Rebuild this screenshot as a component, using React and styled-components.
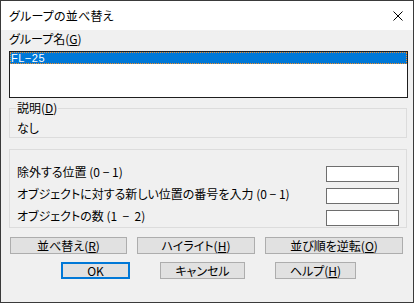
import React from "react"
import styled, { createGlobalStyle } from "styled-components"

const GlobalStyle = createGlobalStyle`
html, body {
  margin: 0;
  padding: 0;
  background: #f0f0f0;
}
body {
  font-family: "Noto Sans CJK JP", "Noto Sans", sans-serif;
  font-size: 12px;
  color: #000;
}
`

const Window = styled.div`
width: 414px;
height: 303px;
box-sizing: border-box;
border: 1px solid #3a3a3a;
background: #f0f0f0;
display: flex;
flex-direction: column;
font-feature-settings: "palt";
`

const TitleBar = styled.div`
height: 29px;
flex: none;
background: #fff;
display: flex;
align-items: center;
justify-content: space-between;
padding: 0 10px 0 8px;
`

const Title = styled.span`
font-size: 12px;
line-height: 14px;
letter-spacing: 0.2px;
`

const Body = styled.div`
flex: 1;
display: flex;
flex-direction: column;
padding: 2px 5px 0 8px;
`

const FieldLabel = styled.div`
line-height: 14px;
height: 14px;
margin-bottom: 5px;
`

const ListBox = styled.div`
height: 47px;
box-sizing: border-box;
border: 1px solid #1e1e1e;
background: #fff;
`

const ListItem = styled.div`
height: 12px;
line-height: 12px;
padding-left: 1px;
color: #fff;
background: ${p => (p.$selected ? "#0078d7" : "transparent")};
outline: 1px dotted #f08c28;
outline-offset: -1px;
font-family: "Liberation Sans", "Noto Sans CJK JP", sans-serif;
font-size: 11px;
letter-spacing: 0.5px;
`

const GroupBox = styled.fieldset`
margin: 0 1px 0 0;
border: 1px solid #dcdcdc;
padding: ${p => p.$pad || "0 7px"};
min-width: 0;
`

const Legend = styled.legend`
padding: 0 1px;
margin-left: -1px;
line-height: 14px;
`

const PlainText = styled.div`
line-height: 14px;
`

const ParamList = styled.div`
display: flex;
flex-direction: column;
gap: 6px;
`

const ParamRow = styled.div`
display: flex;
align-items: center;
justify-content: space-between;
height: 16px;
padding-right: 7px;
`

const ParamLabel = styled.span`
line-height: 14px;
padding-bottom: 4px;
white-space: pre;
`

const TextInput = styled.input`
width: 73px;
height: 16px;
box-sizing: border-box;
border: 1px solid #6e6e6e;
background: #fff;
margin: 0;
padding: 0 2px;
font: inherit;
`

const ButtonRow = styled.div`
display: flex;
gap: ${p => p.$gap}px;
margin-left: ${p => p.$indent}px;
margin-top: ${p => p.$top}px;
`

const Button = styled.button`
width: ${p => p.$w}px;
height: 17px;
box-sizing: border-box;
margin: 0;
padding: 0;
background: #e1e1e1;
border: ${p => (p.$default ? "2px solid #0078d7" : "1px solid #adadad")};
font-family: inherit;
font-size: 12px;
line-height: 13px;
color: #000;
font-feature-settings: "palt";
`

function CloseIcon() {
  return (
    <svg width="10" height="10" viewBox="0 0 10 10">
      <path d="M0.5 0.5 L9.5 9.5 M9.5 0.5 L0.5 9.5" stroke="#000" strokeWidth="1" fill="none" />
    </svg>
  )
}

export default function App() {
  return (
    <>
      <GlobalStyle />
      <Window>
        <TitleBar>
          <Title>グループの並べ替え</Title>
          <CloseIcon />
        </TitleBar>
        <Body>
          <FieldLabel>グループ名(<u>G</u>)</FieldLabel>
          <ListBox>
            <ListItem $selected>FL−25</ListItem>
          </ListBox>
          <GroupBox $pad="6px 7px 2px" style={{ marginTop: 3 }}>
            <Legend>説明(<u>D</u>)</Legend>
            <PlainText>なし</PlainText>
          </GroupBox>
          <GroupBox $pad="16px 0 1px 7px" style={{ marginTop: 11 }}>
            <ParamList>
              <ParamRow>
                <ParamLabel>除外する位置 (0 − 1)</ParamLabel>
                <TextInput />
              </ParamRow>
              <ParamRow>
                <ParamLabel>オブジェクトに対する新しい位置の番号を入力 (0 − 1)</ParamLabel>
                <TextInput />
              </ParamRow>
              <ParamRow>
                <ParamLabel>オブジェクトの数 (1  −  2)</ParamLabel>
                <TextInput />
              </ParamRow>
            </ParamList>
          </GroupBox>
          <ButtonRow $gap={10} $indent={1} $top={9}>
            <Button $w={117}>並べ替え(<u>R</u>)</Button>
            <Button $w={118}>ハイライト(<u>H</u>)</Button>
            <Button $w={138}>並び順を逆転(<u>O</u>)</Button>
          </ButtonRow>
          <ButtonRow $gap={30} $indent={52} $top={8}>
            <Button $w={69} $default>OK</Button>
            <Button $w={85}>キャンセル</Button>
            <Button $w={81}>ヘルプ(<u>H</u>)</Button>
          </ButtonRow>
        </Body>
      </Window>
    </>
  )
}
